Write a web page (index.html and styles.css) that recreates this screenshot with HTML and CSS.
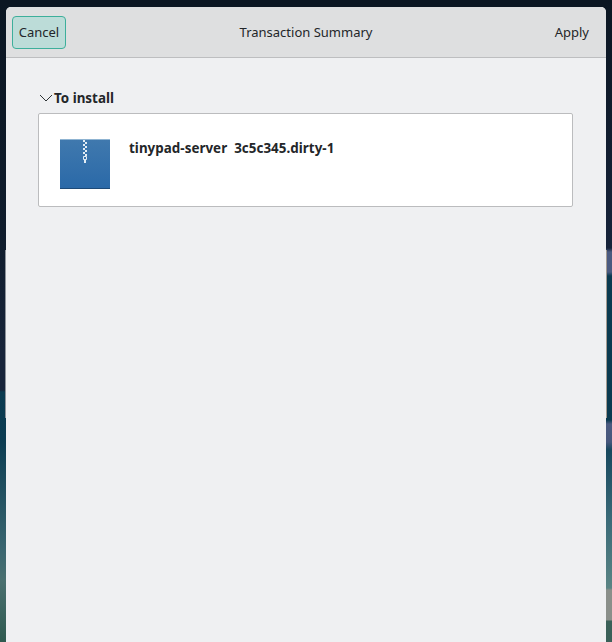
FILE: index.html
```html
<!DOCTYPE html>
<html lang="en">
<head>
<meta charset="utf-8">
<title>Transaction Summary</title>
<link rel="stylesheet" href="styles.css">
</head>
<body>
<div class="desktop">
  <div class="strip strip-left"><span class="edge edge-left"></span></div>
  <main class="dialog">
    <header class="titlebar">
      <button class="btn btn-cancel" type="button">Cancel</button>
      <h1 class="title">Transaction Summary</h1>
      <button class="btn btn-apply" type="button">Apply</button>
    </header>
    <section class="content">
      <div class="section-head">
        <svg class="chevron" width="14" height="8" viewBox="0 0 14 8" aria-hidden="true"><path d="M1 1l6 6 6-6" fill="none" stroke="#2e3436" stroke-width="1"/></svg>
        <span class="section-label">To install</span>
      </div>
      <div class="card">
        <svg class="pkg" width="50" height="50" viewBox="0 0 50 50" aria-hidden="true">
          <defs>
            <linearGradient id="pkgfill" x1="0" y1="0" x2="0" y2="1">
              <stop offset="0" stop-color="#4079ae"/>
              <stop offset="1" stop-color="#2a69a8"/>
            </linearGradient>
          </defs>
          <rect width="50" height="50" fill="url(#pkgfill)"/>
          <rect width="50" height="1" fill="#8fb4d2"/>
          <rect y="49" width="50" height="1" fill="#1d4a78"/>
          <path d="M23 1h2v2h-2zM25 3h2v2h-2zM23 5h2v2h-2zM25 7h2v2h-2zM23 9h2v2h-2zM25 11h2v2h-2zM23 13h2v2h-2zM25 15h2v2h-2z" fill="#e3edf5"/>
          <path d="M23.5 17.5h3v3h-3z" fill="none" stroke="#e3edf5"/>
          <rect x="24" y="21" width="2" height="3" fill="#e3edf5"/>
        </svg>
        <div class="pkg-name">tinypad-server&nbsp; 3c5c345.dirty-1</div>
      </div>
    </section>
  </main>
  <div class="strip strip-right"><span class="edge edge-right"></span></div>
</div>
</body>
</html>
```
FILE: styles.css
```css
* { box-sizing: border-box; }
html, body { margin: 0; padding: 0; }
body {
  width: 612px;
  height: 642px;
  overflow: hidden;
  font-family: "Noto Sans", sans-serif;
  color: #232629;
  background: #0b1622;
}
.desktop {
  display: flex;
  width: 612px;
  height: 642px;
  padding-top: 7px;
}
.strip {
  position: relative;
  width: 6px;
  flex: none;
  margin-top: -7px;
}
.strip-left {
  background: linear-gradient(180deg,
    #0b1622 0, #0f1c2c 230px, #17243a 350px, #17243a 390px,
    #0a3a50 392px, #0b3c52 440px, #3a6670 550px, #4a7070 580px, #2f5a50 642px);
}
.strip-right {
  background: linear-gradient(180deg,
    #0b1622 0, #16233a 248px, #4a5a80 252px, #4a5a80 272px,
    #0a3a50 276px, #0a3a50 420px, #4a5a80 424px, #46577c 442px,
    #17485e 450px, #3a6a78 520px, #5a8484 588px, #8a8f8a 590px,
    #8a8f8a 620px, #3a6058 621px, #3a6058 642px);
}
.edge {
  position: absolute;
  top: 250px;
  width: 1px;
  height: 168px;
}
.edge-left { right: 0; background: #8d939b; }
.edge-right { left: 0; background: #a39a90; }
.dialog {
  flex: 1;
  display: flex;
  flex-direction: column;
  background: #eff0f2;
  border-radius: 5px 5px 0 0;
  overflow: hidden;
}
.titlebar {
  flex: none;
  height: 51px;
  display: grid;
  grid-template-columns: 1fr auto 1fr;
  align-items: center;
  padding: 0 16px 0 6px;
  background: #dedfe0;
  border-bottom: 1px solid #bdbec0;
}
.title {
  margin: 0;
  font-size: 13px;
  font-weight: 400;
  line-height: 18px;
  position: relative;
  left: 5px;
}
.btn {
  font: inherit;
  font-size: 13px;
  line-height: 18px;
  color: #232629;
  background: transparent;
  border: 1px solid transparent;
  border-radius: 4px;
  padding: 0;
}
.btn-apply {
  justify-self: end;
}
.btn-cancel {
  justify-self: start;
  width: 54px;
  height: 33px;
  background: #bcdcd8;
  border-color: #3daf9b;
}
.content {
  flex: 1;
  padding: 30px 33px 0 32px;
}
.section-head {
  display: flex;
  align-items: center;
  height: 20px;
  gap: 1px;
  padding-left: 1px;
}
.chevron { flex: none; }
.section-label {
  font-size: 13.4px;
  font-weight: 700;
  line-height: 18px;
}
.card {
  display: flex;
  align-items: flex-start;
  height: 94px;
  margin-top: 5px;
  padding: 25px 21px 0;
  gap: 19px;
  background: #fff;
  border: 1px solid #bbbcbe;
  border-radius: 2px;
}
.pkg { flex: none; }
.pkg-name {
  font-size: 13.4px;
  font-weight: 700;
  line-height: 18px;
  letter-spacing: 0.03px;
}
```
